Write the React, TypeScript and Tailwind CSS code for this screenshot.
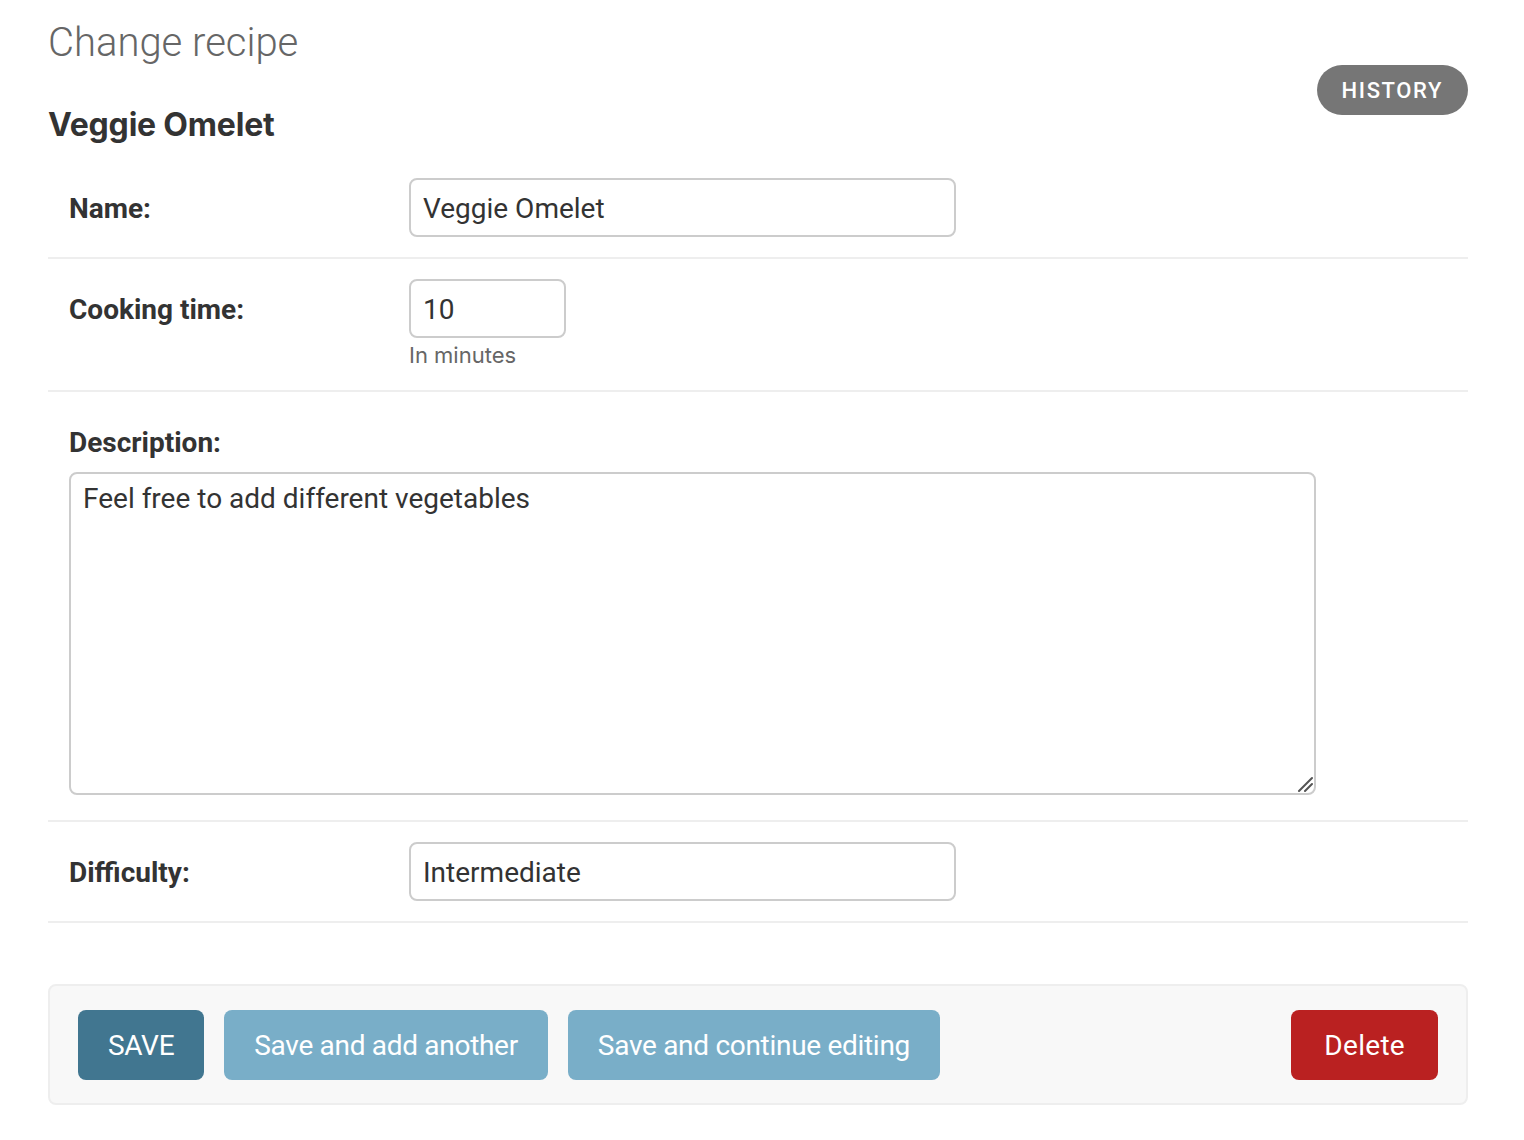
import { type ReactNode } from 'react'

const font = "font-['Roboto','Liberation_Sans',sans-serif]"
const inter = "font-['Inter','Liberation_Sans',sans-serif]"

function Row({ label, children }: { label: string; children: ReactNode }) {
  return (
    <div className="flex border-b-2 border-[#eeeeee] px-[21px] py-[20px]">
      <label className="w-[340px] shrink-0 pt-[12px] text-[28px] font-bold leading-[38px] text-[#333]">{label}</label>
      <div className="flex flex-col">{children}</div>
    </div>
  )
}

const inputCls =
  'h-[59px] rounded-[8px] border-2 border-[#cccccc] bg-white px-[12px] pt-[2px] text-[28px] leading-[34px] text-[#333] outline-none'

const btn = 'h-[70px] rounded-[8px] pt-[3px] text-[28px] tracking-[-0.3px] text-white'

export default function App() {
  return (
    <div className={`${font} min-h-[1140px] bg-white`}>
      <div className="ml-[48px] w-[1420px] pt-[19px]">
        <div className="flex items-start justify-between">
          <div>
            <h1 className="text-[40px] font-light leading-[48px] text-[#666]">Change recipe</h1>
            <h2 className={`${inter} mt-[38px] text-[32px] font-bold leading-[40px] tracking-[-0.2px] text-[#333]`}>
              Veggie Omelet
            </h2>
          </div>
          <button className="mt-[46px] h-[50px] rounded-full bg-[#767676] px-[25px] text-[22px] font-medium tracking-[1.6px] text-white">
            HISTORY
          </button>
        </div>

        <div className="mt-[13px]">
          <Row label="Name:">
            <input className={`${inputCls} w-[547px]`} defaultValue="Veggie Omelet" />
          </Row>
          <Row label="Cooking time:">
            <input className={`${inputCls} w-[157px]`} defaultValue="10" />
            <div className={`${inter} mt-[2px] text-[22px] leading-[30px] text-[#666]`}>In minutes</div>
          </Row>
          <div className="border-b-2 border-[#eeeeee] px-[21px] pt-[31px] pb-[25px]">
            <label className="block text-[28px] font-bold leading-[40px] text-[#333]">Description:</label>
            <div className="relative mt-[9px] w-[1247px]">
              <textarea
                className="block h-[323px] w-full resize-none rounded-[8px] border-2 border-[#cccccc] bg-white px-[12px] py-[6px] text-[28px] leading-[38px] text-[#333] outline-none"
                defaultValue="Feel free to add different vegetables"
              />
              <svg className="absolute right-[3px] bottom-[3px]" width="16" height="16" viewBox="0 0 16 16">
                <path d="M2 15 L15 2 M8 15 L15 8" stroke="#555" strokeWidth="2" strokeLinecap="round" />
              </svg>
            </div>
          </div>
          <Row label="Difficulty:">
            <input className={`${inputCls} w-[547px]`} defaultValue="Intermediate" />
          </Row>
        </div>

        <div className="mt-[61px] flex h-[121px] items-center rounded-[8px] border-2 border-[#eeeeee] bg-[#f8f8f8] px-[28px]">
          <button className={`${btn} px-[30px] bg-[#417690]`}>SAVE</button>
          <button className={`${btn} ml-[20px] px-[30px] bg-[#79aec8]`}>Save and add another</button>
          <button className={`${btn} ml-[20px] px-[30px] bg-[#79aec8]`}>Save and continue editing</button>
          <button className={`${btn} ml-auto px-[33px] tracking-[0.3px] bg-[#ba2121]`}>Delete</button>
        </div>
      </div>
    </div>
  )
}
